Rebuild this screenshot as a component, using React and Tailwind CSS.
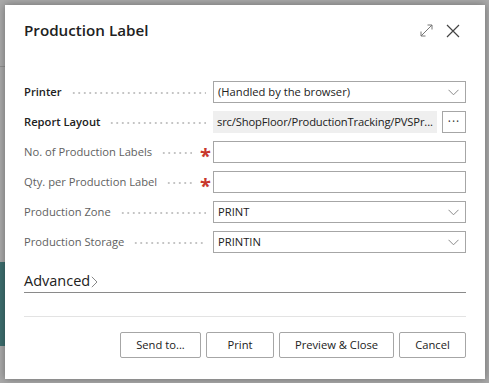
import React from 'react';

const font = { fontFamily: '"Open Sans", "Liberation Sans", sans-serif' };

const Chevron = () => (
  <svg width="11" height="7" viewBox="0 0 11 7" className="shrink-0">
    <path d="M0.5 0.8 L5.5 5.8 L10.5 0.8" fill="none" stroke="#8a8a8a" strokeWidth="1" />
  </svg>
);

const Dots = ({ required }) => (
  <div className={`flex-1 h-[2px] ml-[9px] ${required ? 'mr-[8px]' : 'mr-[7px]'} mt-[2px] bg-[radial-gradient(circle,#c4c4c4_0.7px,transparent_1px)] bg-[length:5.5px_2px] bg-repeat-x`} />
);

const Label = ({ text, bold, required }) => (
  <div className="w-[189px] shrink-0 flex items-center h-full">
    <span className={`text-[11.2px] whitespace-nowrap ${bold ? 'font-semibold text-[#212121]' : 'text-[#616161]'}`}>{text}</span>
    <Dots required={required} />
    {required && (
      <span className="text-[#c8372d] text-[20px] leading-none w-[12px] mr-[1px] mt-[7px] font-bold">*</span>
    )}
  </div>
);

const Row = ({ children, ...props }) => (
  <div className="flex items-center h-[22px]">
    <Label {...props} />
    <div className="flex-1 min-w-0 flex h-full">{children}</div>
  </div>
);

const Select = ({ value }) => (
  <div className="flex-1 flex items-center justify-between border border-[#a6a6a6] px-[4px] pr-[6px] text-[11.2px] text-[#212121] bg-white">
    <span>{value}</span>
    <Chevron />
  </div>
);

const Input = () => <div className="flex-1 border border-[#a6a6a6] bg-white" />;

const Button = ({ children, w }) => (
  <button className={`${w} h-[26px] border border-[#a6a6a6] rounded-[2px] bg-white text-[11.2px] text-[#212121]`}>{children}</button>
);

export default function App() {
  return (
    <div className="relative w-[489px] h-[383px] bg-[#a9a9a9] overflow-hidden pl-[5px] pt-[5px] pr-[4px] pb-[4px]" style={font}>
      {/* page behind the overlay */}
      <div className="absolute left-0 top-[66px] w-[5px] h-px bg-[#8f8f8f]" />
      <div className="absolute left-0 top-[262px] w-[5px] h-[84px] bg-[#3d6e6e]" />

      <div className="relative h-full bg-white shadow-[0_0_8px_rgba(0,0,0,0.35)] px-[19px] flex flex-col">
        <header className="flex items-center justify-between h-[52px] pb-[1px]">
          <h1 className="text-[15.2px] font-semibold text-[#212121]">Production Label</h1>
          <div className="flex items-center gap-[13px] mr-[6px]">
            <svg width="13" height="13" viewBox="0 0 13 13">
              <path d="M1 12 L12 1 M7.5 1 H12 V5.5 M1 7.5 V12 H5.5" fill="none" stroke="#777" strokeWidth="1" />
            </svg>
            <svg width="14" height="14" viewBox="0 0 14 14">
              <path d="M1 1 L13 13 M13 1 L1 13" fill="none" stroke="#444" strokeWidth="1.2" />
            </svg>
          </div>
        </header>

        <div className="flex flex-col gap-2 mt-[24px]">
          <Row text="Printer" bold>
            <Select value="(Handled by the browser)" />
          </Row>
          <Row text="Report Layout" bold>
            <div className="flex-1 min-w-0 flex items-center bg-[#efefef] px-[4px] text-[11.2px] tracking-[-0.15px] text-[#212121] whitespace-nowrap overflow-hidden">
              src/ShopFloor/ProductionTracking/PVSPr...
            </div>
            <div className="w-[24px] shrink-0 ml-[5px] border border-[#a6a6a6] flex items-center justify-center text-[12px] text-[#333] leading-none tracking-[1px]">···</div>
          </Row>
          <Row text="No. of Production Labels" required>
            <Input />
          </Row>
          <Row text="Qty. per Production Label" required>
            <Input />
          </Row>
          <Row text="Production Zone">
            <Select value="PRINT" />
          </Row>
          <Row text="Production Storage">
            <Select value="PRINTIN" />
          </Row>
        </div>

        <div className="mt-[18px] border-b border-[#8a8a8a] pb-[1px] flex items-center h-[22px]">
          <span className="text-[14.5px] text-[#212121]">Advanced</span>
          <svg width="7" height="12" viewBox="0 0 7 12" className="ml-[1px] mt-[2px]">
            <path d="M0.8 0.8 L6 6 L0.8 11.2" fill="none" stroke="#888" strokeWidth="1" />
          </svg>
        </div>

        <div className="mt-[23px] h-px bg-[#e3e3e3]" />

        <div className="flex justify-end gap-[5px] mt-[15px]">
          <Button w="w-[81px]">Send to...</Button>
          <Button w="w-[68px]">Print</Button>
          <Button w="w-[115px]">Preview &amp; Close</Button>
          <Button w="w-[67px]">Cancel</Button>
        </div>
      </div>
    </div>
  );
}
